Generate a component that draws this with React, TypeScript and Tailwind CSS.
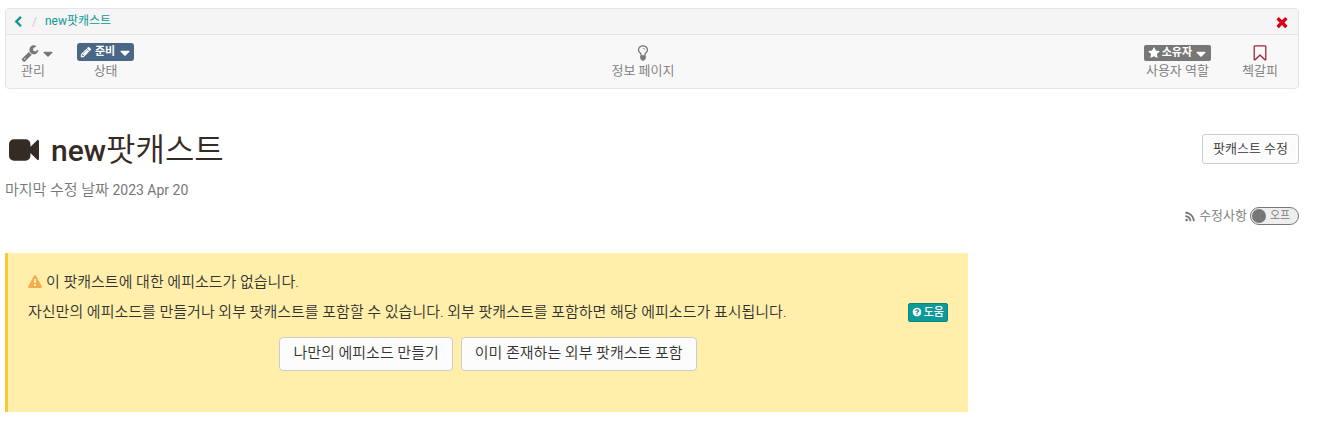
import { useState } from 'react';

const ICONS = {
  chevronLeft:
    'M1427 301l-531 531 531 531q19 19 19 45t-19 45l-166 166q-19 19-45 19t-45-19l-742-742q-19-19-19-45t19-45l742-742q19-19 45-19t45 19l166 166q19 19 19 45t-19 45z',
  times:
    'M1490 1322q0 40-28 68l-136 136q-28 28-68 28t-68-28l-294-294-294 294q-28 28-68 28t-68-28l-136-136q-28-28-28-68t28-68l294-294-294-294q-28-28-28-68t28-68l136-136q28-28 68-28t68 28l294 294 294-294q28-28 68-28t68 28l136 136q28 28 28 68t-28 68l-294 294 294 294q28 28 28 68z',
  video:
    'M1792 352v1088q0 42-39 59-13 5-25 5-27 0-45-19l-403-403v166q0 119-84.5 203.5t-203.5 84.5h-704q-119 0-203.5-84.5t-84.5-203.5v-704q0-119 84.5-203.5t203.5-84.5h704q119 0 203.5 84.5t84.5 203.5v165l403-402q18-19 45-19 12 0 25 5 39 17 39 59z',
  wrench:
    'M448 1472q0-26-19-45t-45-19-45 19-19 45 19 45 45 19 45-19 19-45zm644-420l-682 682q-37 37-90 37-52 0-91-37l-106-108q-38-36-38-90 0-53 38-91l681-681q39 98 114.5 173.5t173.5 114.5zm634-435q0 39-23 106-47 134-164.5 217.5t-258.5 83.5q-185 0-316.5-131.5t-131.5-316.5 131.5-316.5 316.5-131.5q58 0 121.5 16.5t107.5 46.5q16 11 16 28t-16 28l-293 169v224l193 107q5-3 79-48.5t135.5-81 70.5-35.5q15 0 23.5 10t8.5 25z',
  star:
    'M1728 647q0 22-26 48l-363 354 86 500q1 7 1 20 0 21-10.5 35.5t-30.5 14.5q-19 0-40-12l-449-236-449 236q-22 12-40 12-21 0-31.5-14.5t-10.5-35.5q0-6 2-20l86-500-364-354q-25-27-25-48 0-37 56-46l502-73 225-455q19-41 49-41t49 41l225 455 502 73q56 9 56 46z',
  bookmark:
    'M1408 256h-1024v1242l423-406 89-85 89 85 423 406v-1242zm12-128q23 0 44 9 33 13 52.5 41t19.5 62v1289q0 34-19.5 62t-52.5 41q-19 8-44 8-48 0-83-32l-441-424-441 424q-36 33-83 33-23 0-44-9-33-13-52.5-41t-19.5-62v-1289q0-34 19.5-62t52.5-41q21-9 44-9h1048z',
  warning:
    'M1024 1375v-190q0-14-9.5-23.5t-22.5-9.5h-192q-13 0-22.5 9.5t-9.5 23.5v190q0 14 9.5 23.5t22.5 9.5h192q13 0 22.5-9.5t9.5-23.5zm-2-374l18-459q0-12-10-19-13-11-24-11h-220q-11 0-24 11-10 7-10 21l17 457q0 10 10 16.5t24 6.5h185q14 0 23.5-6.5t10.5-16.5zm-14-934l768 1408q35 63-2 126-17 29-46.5 46t-63.5 17h-1536q-34 0-63.5-17t-46.5-46q-37-63-2-126l768-1408q17-31 47-49t65-18 65 18 47 49z',
  question:
    'M1024 1376v-192q0-14-9-23t-23-9h-192q-14 0-23 9t-9 23v192q0 14 9 23t23 9h192q14 0 23-9t9-23zm256-672q0-88-55.5-163t-138.5-116-170-41q-243 0-371 213-15 24 8 42l132 100q7 6 19 6 16 0 25-12 53-68 86-92 34-24 86-24 48 0 85.5 26t37.5 59q0 38-20 61t-68 45q-63 28-115.5 86.5t-52.5 125.5v36q0 14 9 23t23 9h192q14 0 23-9t9-23q0-19 21.5-49.5t54.5-49.5q32-18 49-28.5t46-35 44.5-48 28-60.5 12.5-81zm384 192q0 209-103 385.5t-279.5 279.5-385.5 103-385.5-103-279.5-279.5-103-385.5 103-385.5 279.5-279.5 385.5-103 385.5 103 279.5 279.5 103 385.5z',
  rss:
    'M576 1344q0 80-56 136t-136 56-136-56-56-136 56-136 136-56 136 56 56 136zm512 123q2 28-17 48-18 21-47 21h-135q-25 0-43-16.5t-20-41.5q-22-229-184.5-391.5t-391.5-184.5q-25-2-41.5-20t-16.5-43v-135q0-29 21-47 17-17 43-17h5q160 13 306 80.5t259 181.5q114 113 181.5 259t80.5 306zm512 2q2 27-18 47-18 20-46 20h-143q-26 0-44.5-17.5t-19.5-42.5q-12-215-101-408.5t-231.5-336-336-231.5-408.5-102q-25-1-42.5-19.5t-17.5-43.5v-143q0-28 20-46 18-18 44-18h3q262 13 501.5 120t425.5 294q187 186 294 425.5t120 501.5z',
  bulb:
    'M1120 576q0 13-9.5 22.5t-22.5 9.5-22.5-9.5-9.5-22.5q0-46-54-71t-106-25q-13 0-22.5-9.5t-9.5-22.5 9.5-22.5 22.5-9.5q50 0 99.5 16t87 54 37.5 90zm160 0q0-72-34.5-134t-90-101.5-123-62-136.5-22.5-136.5 22.5-123 62-90 101.5-34.5 134q0 101 68 180 10 11 30.5 33t30.5 33q128 153 141 298h228q13-145 141-298 10-11 30.5-33t30.5-33q68-79 68-180zm128 0q0 155-103 268-45 49-74.5 87t-59.5 95.5-34 107.5q47 28 47 82 0 37-25 64 25 27 25 64 0 52-45 81 13 23 13 47 0 46-31.5 71t-77.5 25q-20 44-60 70t-87 26-87-26-60-70q-46 0-77.5-25t-31.5-71q0-24 13-47-45-29-45-81 0-37 25-64-25-27-25-64 0-54 47-82-4-50-34-107.5t-59.5-95.5-74.5-87q-103-113-103-268 0-99 44.5-184.5t117-142 164-89 186.5-32.5 186.5 32.5 164 89 117 142 44.5 184.5z',
  caret:
    'M1408 704q0 26-19 45l-448 448q-19 19-45 19t-45-19l-448-448q-19-19-19-45t19-45 45-19h896q26 0 45 19t19 45z',
  pencil:
    'M491 1536l91-91-235-235-91 91v107h128v128h107zm523-928q0-22-22-22-10 0-17 7l-542 542q-7 7-7 17 0 22 22 22 10 0 17-7l542-542q7-7 7-17zm-54-192l416 416-832 832h-416v-416zm683 96q0 53-37 90l-166 166-416-416 166-165q36-38 90-38 53 0 91 38l235 234q37 39 37 91z',
};

function Icon({ name, className }: { name: keyof typeof ICONS; className: string }) {
  return (
    <svg viewBox="0 0 1792 1792" fill="currentColor" aria-hidden="true" className={`shrink-0 ${className}`}>
      <path d={ICONS[name]} />
    </svg>
  );
}

function Breadcrumb() {
  return (
    <nav className="flex h-[26px] items-center border-b border-[#e5e5e5] bg-[#f5f5f5] pr-2 pl-1.5 text-xs text-[#0f9796]">
      <a href="#back" aria-label="back">
        <Icon name="chevronLeft" className="size-3" />
      </a>
      <span className="px-2 text-[#cccccc]">/</span>
      <a href="#podcast" className="pb-0.5">
        new팟캐스트
      </a>
      <button type="button" aria-label="close" className="ml-auto text-[#d9001b]">
        <Icon name="times" className="size-4" />
      </button>
    </nav>
  );
}

function Toolbar() {
  return (
    <div className="flex items-start justify-between py-2 pr-5 pl-[15px] text-[13px] leading-[18px] font-[350] text-[#777777]">
      <div className="flex items-start gap-[21px] pr-2">
        <button type="button" className="flex flex-col items-start">
          <span className="flex h-[19px] items-center">
            <Icon name="wrench" className="size-[18px]" />
            <Icon name="caret" className="mt-0.5 ml-px size-4" />
          </span>
          <span>관리</span>
        </button>
        <button type="button" className="flex flex-col items-center">
          <span className="flex h-[19px] items-start">
            <span className="flex h-[18px] items-center rounded-[3px] bg-[#4a6785] pr-px pl-[3px] text-[11px] font-bold text-white">
              <Icon name="pencil" className="mr-[3px] size-3" />
              준비
              <Icon name="caret" className="mt-0.5 ml-0.5 size-4" />
            </span>
          </span>
          <span>상태</span>
        </button>
      </div>
      <a href="#info" className="flex flex-col items-center">
        <span className="flex h-[19px] items-center">
          <Icon name="bulb" className="size-[18px]" />
        </span>
        정보 페이지
      </a>
      <div className="flex items-start gap-[31px]">
        <button type="button" className="flex flex-col items-center">
          <span className="flex h-[19px] items-center">
            <span className="flex h-4 items-center rounded-[2px] bg-[#777777] pr-0.5 pl-1 text-[11px] font-bold text-white">
              <Icon name="star" className="mr-0.5 size-3" />
              소유자
              <Icon name="caret" className="mt-0.5 ml-px size-4" />
            </span>
          </span>
          <span>사용자 역할</span>
        </button>
        <button type="button" className="flex flex-col items-center">
          <span className="flex h-[19px] items-center text-[#a4213c]">
            <Icon name="bookmark" className="size-[18px]" />
          </span>
          첵갈피
        </button>
      </div>
    </div>
  );
}

function Toggle() {
  const [on, setOn] = useState(false);
  return (
    <button
      type="button"
      role="switch"
      aria-checked={on}
      aria-label="수정사항"
      onClick={() => setOn(!on)}
      className="flex h-[18px] w-[49px] items-center gap-1 rounded-full border border-[#777777] bg-[#eeeeee] pl-px text-[11px] leading-none text-[#777777]"
    >
      <span className="size-[14px] rounded-full bg-[#777777]" />
      <span className="pb-0.5">오프</span>
    </button>
  );
}

function EmptyNotice() {
  return (
    <section className="mt-7 max-w-[963px] border-l-[3px] border-[#f6c93d] bg-[#ffefaa] px-5 pt-[18px] pb-[41px] text-[15px] leading-[22px] font-[350] text-[#333333]">
      <p className="flex items-center gap-1">
        <Icon name="warning" className="size-[14px] text-[#f4ac4f]" />
        이 팟캐스트에 대한 에피소드가 없습니다.
      </p>
      <div className="mt-2 flex items-center justify-between">
        <p>자신만의 에피소드를 만들거나 외부 팟캐스트를 포함할 수 있습니다. 외부 팟캐스트를 포함하면 해당 에피소드가 표시됩니다.</p>
        <button
          type="button"
          className="flex h-[19px] items-center gap-0.5 rounded-[2px] border border-[#0d8483] bg-[#0f9a99] px-[3px] text-[11px] leading-none font-medium text-white"
        >
          <Icon name="question" className="size-[10px]" />
          도움
        </button>
      </div>
      <div className="mt-[14px] flex justify-center gap-2">
        <button type="button" className="h-[34px] rounded-[4px] border border-[#cccccc] bg-[#fcfcfc] px-[13px] pb-0.5">
          나만의 에피소드 만들기
        </button>
        <button type="button" className="h-[34px] rounded-[4px] border border-[#cccccc] bg-[#fcfcfc] px-[13px] pb-0.5">
          이미 존재하는 외부 팟캐스트 포함
        </button>
      </div>
    </section>
  );
}

export default function App() {
  return (
    <div className="bg-white pt-2 pr-[21px] pl-[5px] font-['Roboto','Noto_Sans_CJK_KR',sans-serif] text-[#333333]">
      <header className="overflow-hidden rounded-[4px] border border-[#e5e5e5] bg-[#f8f8f8]">
        <Breadcrumb />
        <Toolbar />
      </header>
      <main>
        <div className="mt-[45px] flex items-start justify-between">
          <h1 className="flex h-8 items-center gap-3 pl-1 text-[32px] leading-8 text-[#352b25]">
            <Icon name="video" className="size-[30px]" />
            <span>
              <span className="text-[30px] font-medium">new</span>
              <span className="font-[350]">팟캐스트</span>
            </span>
          </h1>
          <button type="button" className="h-[30px] rounded-[3px] border border-[#cccccc] bg-[#fcfcfc] px-2.5 text-[13px] font-[350]">
            팟캐스트 수정
          </button>
        </div>
        <p className="mt-[14px] text-sm leading-5 text-[#777777]">
          <span className="text-[15px] font-[350]">마지막 수정 날짜</span> 2023 Apr 20
        </p>
        <div className="mt-[7px] flex items-center justify-end gap-[3px] text-[13px] leading-[18px] font-[350] text-[#777777]">
          <Icon name="rss" className="mt-0.5 size-3" />
          <span>수정사항</span>
          <Toggle />
        </div>
        <EmptyNotice />
      </main>
    </div>
  );
}
